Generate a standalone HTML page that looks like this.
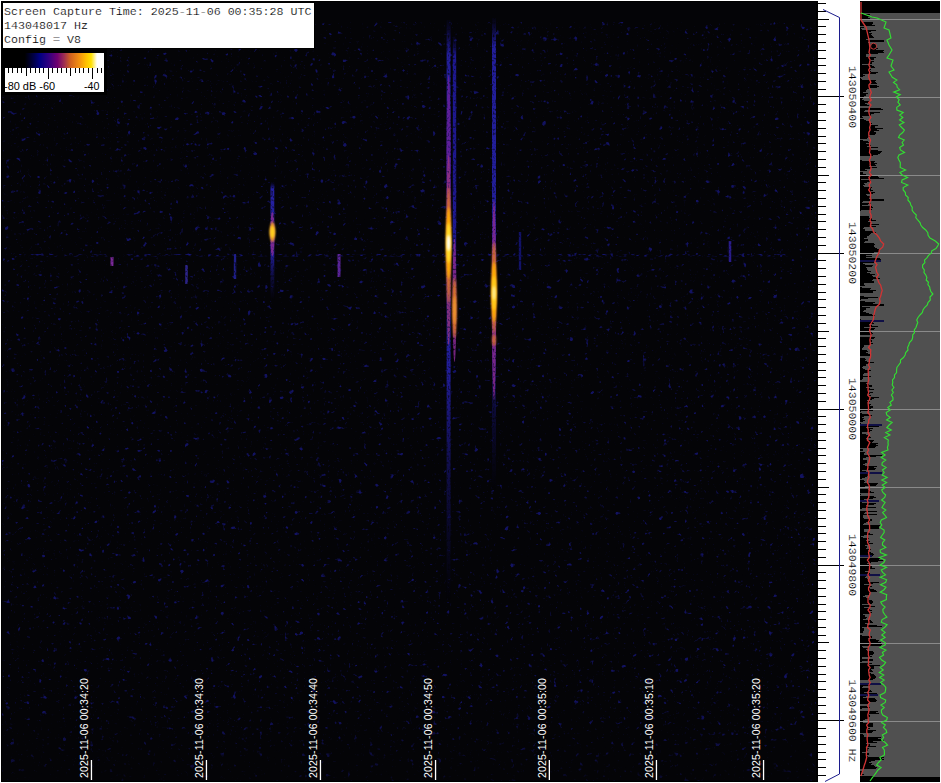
<!DOCTYPE html>
<html><head><meta charset="utf-8"><style>
html,body{margin:0;padding:0;background:#fff;width:941px;height:783px;overflow:hidden;}
svg{display:block;font-family:"Liberation Sans",sans-serif;}
</style></head><body>
<svg width="941" height="783" viewBox="0 0 941 783">

<defs>
<filter id="noise" x="2" y="22" width="814" height="759" filterUnits="userSpaceOnUse" color-interpolation-filters="sRGB">
  <feTurbulence type="fractalNoise" baseFrequency="0.19" numOctaves="2" seed="11" result="t"/>
  <feColorMatrix in="t" type="matrix" values="0 0 0 0 0.07  0 0 0 0 0.07  0 0 0 0 0.38  8 0 0 0 -5.55"/>
  <feGaussianBlur stdDeviation="0.6"/>
</filter>
<filter id="noise2" x="2" y="22" width="814" height="759" filterUnits="userSpaceOnUse" color-interpolation-filters="sRGB">
  <feTurbulence type="fractalNoise" baseFrequency="0.3" numOctaves="2" seed="23" result="t"/>
  <feColorMatrix in="t" type="matrix" values="0 0 0 0 0.05  0 0 0 0 0.05  0 0 0 0 0.22  5 0 0 0 -3.55"/>
  <feGaussianBlur stdDeviation="0.55"/>
</filter>
<filter id="b1" x="-100%" y="-10%" width="300%" height="120%" color-interpolation-filters="sRGB"><feGaussianBlur stdDeviation="1.0"/></filter>
<filter id="b2" x="-100%" y="-10%" width="300%" height="120%" color-interpolation-filters="sRGB"><feGaussianBlur stdDeviation="1.6"/></filter>
<filter id="tex" x="-150%" y="-5%" width="400%" height="110%" color-interpolation-filters="sRGB">
  <feGaussianBlur in="SourceGraphic" stdDeviation="0.6" result="bl"/>
  <feTurbulence type="fractalNoise" baseFrequency="0.6 0.45" numOctaves="1" seed="5" result="t"/>
  <feColorMatrix in="t" type="matrix" values="0 0 0 0 0  0 0 0 0 0  0 0 0 0 0  2.6 0 0 0 -0.3" result="m"/>
  <feComposite in="bl" in2="m" operator="in" result="c"/>
  <feGaussianBlur in="c" stdDeviation="0.75"/>
</filter>
<filter id="tex2" x="0" y="-200%" width="100%" height="500%" color-interpolation-filters="sRGB">
  <feTurbulence type="fractalNoise" baseFrequency="0.25 0.5" numOctaves="1" seed="9" result="t"/>
  <feColorMatrix in="t" type="matrix" values="0 0 0 0 0  0 0 0 0 0  0 0 0 0 0  4 0 0 0 -2.1" result="m"/>
  <feComposite in="SourceGraphic" in2="m" operator="in" result="c"/>
  <feGaussianBlur in="c" stdDeviation="0.7"/>
</filter>
<linearGradient id="cbar" x1="0" x2="1" y1="0" y2="0">
  <stop offset="0" stop-color="#000"/>
  <stop offset="0.20" stop-color="#000"/>
  <stop offset="0.30" stop-color="#000050"/>
  <stop offset="0.35" stop-color="#000080"/>
  <stop offset="0.44" stop-color="#300080"/>
  <stop offset="0.53" stop-color="#700070"/>
  <stop offset="0.60" stop-color="#a03050"/>
  <stop offset="0.66" stop-color="#d06020"/>
  <stop offset="0.75" stop-color="#f39010"/>
  <stop offset="0.82" stop-color="#ffc000"/>
  <stop offset="0.87" stop-color="#ffe000"/>
  <stop offset="0.93" stop-color="#ffffff"/>
  <stop offset="1" stop-color="#ffffff"/>
</linearGradient>
</defs>

<rect x="0" y="0" width="941" height="783" fill="#fff"/>
<rect x="1" y="1" width="817" height="781" fill="#000"/>
<rect x="2" y="2" width="814" height="779" fill="#040407"/>
<rect x="2" y="22" width="814" height="759" filter="url(#noise2)"/>
<rect x="2" y="22" width="814" height="759" filter="url(#noise)"/>
<linearGradient id="fade" x1="0" x2="0" y1="0" y2="1"><stop offset="0" stop-color="#040407" stop-opacity="0"/><stop offset="1" stop-color="#040407" stop-opacity="0.6"/></linearGradient>
<rect x="2" y="700" width="814" height="81" fill="url(#fade)"/>
<rect x="15" y="254" width="775" height="2.5" fill="#16167c" filter="url(#tex2)"/>
<linearGradient id="bg9" x1="0" x2="0" y1="0" y2="1"><stop offset="0" stop-color="#100c60" stop-opacity="0.1"/><stop offset="0.06" stop-color="#221e9a"/><stop offset="0.6" stop-color="#221e9a"/><stop offset="1" stop-color="#100c60" stop-opacity="0"/></linearGradient>
<rect x="446.6" y="20.0" width="4.0" height="580.0" fill="url(#bg9)" filter="url(#tex)"/>
<ellipse cx="448.6" cy="160.0" rx="2.1" ry="85.0" fill="#6a2098" opacity="0.85" filter="url(#tex)"/>
<ellipse cx="448.6" cy="250.0" rx="2.2" ry="95.0" fill="#9a3478" opacity="0.80" filter="url(#tex)"/>
<ellipse cx="448.6" cy="245.0" rx="2.1" ry="58.0" fill="#e07820" opacity="0.95" filter="url(#b1)"/>
<ellipse cx="448.6" cy="243.0" rx="2.4" ry="36.0" fill="#ffb000" opacity="1.00" filter="url(#b1)"/>
<ellipse cx="448.6" cy="243.0" rx="2.2" ry="20.0" fill="#ffe030" opacity="1.00" filter="url(#b1)"/>
<ellipse cx="448.6" cy="243.0" rx="1.7" ry="8.0" fill="#ffffff" opacity="1.00" filter="url(#b1)"/>
<linearGradient id="bg17" x1="0" x2="0" y1="0" y2="1"><stop offset="0" stop-color="#0e0a58" stop-opacity="0.1"/><stop offset="0.06" stop-color="#1e1890"/><stop offset="0.6" stop-color="#1e1890"/><stop offset="1" stop-color="#0e0a58" stop-opacity="0"/></linearGradient>
<rect x="452.8" y="36.0" width="3.4" height="334.0" fill="url(#bg17)" filter="url(#tex)"/>
<ellipse cx="454.5" cy="300.0" rx="1.9" ry="62.0" fill="#8a2a90" opacity="0.85" filter="url(#tex)"/>
<ellipse cx="454.5" cy="308.0" rx="2.0" ry="30.0" fill="#e07a20" opacity="1.00" filter="url(#b1)"/>
<ellipse cx="454.5" cy="310.0" rx="1.4" ry="14.0" fill="#f09a30" opacity="1.00" filter="url(#b1)"/>
<linearGradient id="bg22" x1="0" x2="0" y1="0" y2="1"><stop offset="0" stop-color="#100c60" stop-opacity="0.1"/><stop offset="0.06" stop-color="#221e9a"/><stop offset="0.6" stop-color="#221e9a"/><stop offset="1" stop-color="#100c60" stop-opacity="0"/></linearGradient>
<rect x="492.0" y="18.0" width="4.0" height="472.0" fill="url(#bg22)" filter="url(#tex)"/>
<ellipse cx="494.0" cy="300.0" rx="2.1" ry="100.0" fill="#8a2a90" opacity="0.85" filter="url(#tex)"/>
<ellipse cx="494.0" cy="288.0" rx="2.2" ry="46.0" fill="#e07820" opacity="1.00" filter="url(#b1)"/>
<ellipse cx="494.0" cy="292.0" rx="2.5" ry="30.0" fill="#ffb000" opacity="1.00" filter="url(#b1)"/>
<ellipse cx="494.0" cy="293.0" rx="2.1" ry="17.0" fill="#ffd020" opacity="1.00" filter="url(#b1)"/>
<ellipse cx="494.0" cy="293.0" rx="1.4" ry="7.0" fill="#fff0a0" opacity="1.00" filter="url(#b1)"/>
<ellipse cx="494.0" cy="340.0" rx="1.9" ry="6.0" fill="#d06a30" opacity="1.00" filter="url(#b1)"/>
<linearGradient id="bg30" x1="0" x2="0" y1="0" y2="1"><stop offset="0" stop-color="#100c60" stop-opacity="0.1"/><stop offset="0.06" stop-color="#2420a0"/><stop offset="0.6" stop-color="#2420a0"/><stop offset="1" stop-color="#100c60" stop-opacity="0"/></linearGradient>
<rect x="270.5" y="182.0" width="3.8" height="118.0" fill="url(#bg30)" filter="url(#tex)"/>
<ellipse cx="272.4" cy="234.0" rx="2.2" ry="22.0" fill="#8a2a90" opacity="0.85" filter="url(#tex)"/>
<ellipse cx="272.4" cy="232.0" rx="2.7" ry="10.0" fill="#f0a020" opacity="1.00" filter="url(#b1)"/>
<ellipse cx="272.4" cy="232.0" rx="2.2" ry="6.0" fill="#ffd020" opacity="1.00" filter="url(#b1)"/>
<rect x="337.5" y="254" width="3.0" height="23" fill="#5a2498" filter="url(#tex)"/>
<rect x="110.5" y="257" width="3.0" height="9" fill="#7a2898" filter="url(#tex)"/>
<rect x="185.2" y="265" width="2.6" height="19" fill="#2c2488" filter="url(#tex)"/>
<rect x="233.8" y="254" width="2.4" height="25" fill="#1e1e88" filter="url(#tex)"/>
<rect x="728.7" y="241" width="2.6" height="21" fill="#2a1c8c" filter="url(#tex)"/>
<rect x="518.8" y="232" width="2.4" height="38" fill="#12126a" filter="url(#tex)"/>
<rect x="90.8" y="760" width="1.3" height="20" fill="#fff"/>
<text transform="translate(88.1,778) rotate(-90)" font-family="Liberation Sans" font-size="10.5" letter-spacing="0.18" fill="#fff">2025-11-06 00:34:20</text>
<rect x="205.8" y="760" width="1.3" height="20" fill="#fff"/>
<text transform="translate(203.1,778) rotate(-90)" font-family="Liberation Sans" font-size="10.5" letter-spacing="0.18" fill="#fff">2025-11-06 00:34:30</text>
<rect x="319.8" y="760" width="1.3" height="20" fill="#fff"/>
<text transform="translate(317.1,778) rotate(-90)" font-family="Liberation Sans" font-size="10.5" letter-spacing="0.18" fill="#fff">2025-11-06 00:34:40</text>
<rect x="434.9" y="760" width="1.3" height="20" fill="#fff"/>
<text transform="translate(432.2,778) rotate(-90)" font-family="Liberation Sans" font-size="10.5" letter-spacing="0.18" fill="#fff">2025-11-06 00:34:50</text>
<rect x="548.7" y="760" width="1.3" height="20" fill="#fff"/>
<text transform="translate(546.0,778) rotate(-90)" font-family="Liberation Sans" font-size="10.5" letter-spacing="0.18" fill="#fff">2025-11-06 00:35:00</text>
<rect x="655.8" y="760" width="1.3" height="20" fill="#fff"/>
<text transform="translate(653.1,778) rotate(-90)" font-family="Liberation Sans" font-size="10.5" letter-spacing="0.18" fill="#fff">2025-11-06 00:35:10</text>
<rect x="762.9" y="760" width="1.3" height="20" fill="#fff"/>
<text transform="translate(760.2,778) rotate(-90)" font-family="Liberation Sans" font-size="10.5" letter-spacing="0.18" fill="#fff">2025-11-06 00:35:20</text>
<rect x="1" y="1" width="314" height="48" fill="#000"/>
<rect x="3" y="3" width="311" height="45" fill="#fff"/>
<text x="4.1" y="14.7" font-family="Liberation Mono" font-size="11.65" fill="#000" stroke="#fff" stroke-width="0.18">Screen Capture Time: 2025-11-06 00:35:28 UTC</text>
<text x="4.1" y="28.7" font-family="Liberation Mono" font-size="11.65" fill="#000" stroke="#fff" stroke-width="0.18">143048017 Hz</text>
<text x="4.1" y="42.7" font-family="Liberation Mono" font-size="11.65" fill="#000" stroke="#fff" stroke-width="0.18">Config = V8</text>
<rect x="1" y="48" width="106" height="47" fill="#000"/>
<rect x="5" y="53" width="99" height="15" fill="url(#cbar)"/>
<rect x="5" y="68" width="99" height="24" fill="#fff"/>
<rect x="8" y="68" width="1" height="5" fill="#000" shape-rendering="crispEdges"/>
<rect x="12" y="68" width="1" height="5" fill="#000" shape-rendering="crispEdges"/>
<rect x="17" y="68" width="1" height="5" fill="#000" shape-rendering="crispEdges"/>
<rect x="21" y="68" width="1" height="5" fill="#000" shape-rendering="crispEdges"/>
<rect x="26" y="68" width="1" height="8" fill="#000" shape-rendering="crispEdges"/>
<rect x="30" y="68" width="1" height="5" fill="#000" shape-rendering="crispEdges"/>
<rect x="35" y="68" width="1" height="5" fill="#000" shape-rendering="crispEdges"/>
<rect x="39" y="68" width="1" height="5" fill="#000" shape-rendering="crispEdges"/>
<rect x="43" y="68" width="1" height="5" fill="#000" shape-rendering="crispEdges"/>
<rect x="48" y="68" width="1" height="11" fill="#000" shape-rendering="crispEdges"/>
<rect x="52" y="68" width="1" height="5" fill="#000" shape-rendering="crispEdges"/>
<rect x="57" y="68" width="1" height="5" fill="#000" shape-rendering="crispEdges"/>
<rect x="61" y="68" width="1" height="5" fill="#000" shape-rendering="crispEdges"/>
<rect x="66" y="68" width="1" height="5" fill="#000" shape-rendering="crispEdges"/>
<rect x="70" y="68" width="1" height="8" fill="#000" shape-rendering="crispEdges"/>
<rect x="75" y="68" width="1" height="5" fill="#000" shape-rendering="crispEdges"/>
<rect x="79" y="68" width="1" height="5" fill="#000" shape-rendering="crispEdges"/>
<rect x="83" y="68" width="1" height="5" fill="#000" shape-rendering="crispEdges"/>
<rect x="88" y="68" width="1" height="5" fill="#000" shape-rendering="crispEdges"/>
<rect x="92" y="68" width="1" height="11" fill="#000" shape-rendering="crispEdges"/>
<rect x="97" y="68" width="1" height="5" fill="#000" shape-rendering="crispEdges"/>
<rect x="101" y="68" width="1" height="5" fill="#000" shape-rendering="crispEdges"/>
<text x="4" y="89.8" font-family="Liberation Sans" font-size="10.95" fill="#000">-80 dB -60</text>
<text x="84" y="89.8" font-family="Liberation Sans" font-size="10.7" fill="#000">-40</text>
<rect x="818" y="3" width="8" height="1" fill="#000" shape-rendering="crispEdges"/>
<rect x="818" y="11" width="8" height="1" fill="#000" shape-rendering="crispEdges"/>
<rect x="818" y="19" width="11" height="1" fill="#000" shape-rendering="crispEdges"/>
<rect x="818" y="26" width="8" height="1" fill="#000" shape-rendering="crispEdges"/>
<rect x="818" y="34" width="8" height="1" fill="#000" shape-rendering="crispEdges"/>
<rect x="818" y="42" width="8" height="1" fill="#000" shape-rendering="crispEdges"/>
<rect x="818" y="50" width="8" height="1" fill="#000" shape-rendering="crispEdges"/>
<rect x="818" y="58" width="8" height="1" fill="#000" shape-rendering="crispEdges"/>
<rect x="818" y="65" width="8" height="1" fill="#000" shape-rendering="crispEdges"/>
<rect x="818" y="73" width="8" height="1" fill="#000" shape-rendering="crispEdges"/>
<rect x="818" y="81" width="8" height="1" fill="#000" shape-rendering="crispEdges"/>
<rect x="818" y="89" width="8" height="1" fill="#000" shape-rendering="crispEdges"/>
<rect x="818" y="96" width="26" height="1" fill="#000" shape-rendering="crispEdges"/>
<rect x="818" y="104" width="8" height="1" fill="#000" shape-rendering="crispEdges"/>
<rect x="818" y="112" width="8" height="1" fill="#000" shape-rendering="crispEdges"/>
<rect x="818" y="120" width="8" height="1" fill="#000" shape-rendering="crispEdges"/>
<rect x="818" y="128" width="8" height="1" fill="#000" shape-rendering="crispEdges"/>
<rect x="818" y="136" width="8" height="1" fill="#000" shape-rendering="crispEdges"/>
<rect x="818" y="143" width="8" height="1" fill="#000" shape-rendering="crispEdges"/>
<rect x="818" y="151" width="8" height="1" fill="#000" shape-rendering="crispEdges"/>
<rect x="818" y="159" width="8" height="1" fill="#000" shape-rendering="crispEdges"/>
<rect x="818" y="167" width="8" height="1" fill="#000" shape-rendering="crispEdges"/>
<rect x="818" y="175" width="11" height="1" fill="#000" shape-rendering="crispEdges"/>
<rect x="818" y="182" width="8" height="1" fill="#000" shape-rendering="crispEdges"/>
<rect x="818" y="190" width="8" height="1" fill="#000" shape-rendering="crispEdges"/>
<rect x="818" y="198" width="8" height="1" fill="#000" shape-rendering="crispEdges"/>
<rect x="818" y="206" width="8" height="1" fill="#000" shape-rendering="crispEdges"/>
<rect x="818" y="214" width="8" height="1" fill="#000" shape-rendering="crispEdges"/>
<rect x="818" y="221" width="8" height="1" fill="#000" shape-rendering="crispEdges"/>
<rect x="818" y="229" width="8" height="1" fill="#000" shape-rendering="crispEdges"/>
<rect x="818" y="237" width="8" height="1" fill="#000" shape-rendering="crispEdges"/>
<rect x="818" y="245" width="8" height="1" fill="#000" shape-rendering="crispEdges"/>
<rect x="818" y="253" width="26" height="1" fill="#000" shape-rendering="crispEdges"/>
<rect x="818" y="260" width="8" height="1" fill="#000" shape-rendering="crispEdges"/>
<rect x="818" y="268" width="8" height="1" fill="#000" shape-rendering="crispEdges"/>
<rect x="818" y="276" width="8" height="1" fill="#000" shape-rendering="crispEdges"/>
<rect x="818" y="284" width="8" height="1" fill="#000" shape-rendering="crispEdges"/>
<rect x="818" y="292" width="8" height="1" fill="#000" shape-rendering="crispEdges"/>
<rect x="818" y="299" width="8" height="1" fill="#000" shape-rendering="crispEdges"/>
<rect x="818" y="307" width="8" height="1" fill="#000" shape-rendering="crispEdges"/>
<rect x="818" y="315" width="8" height="1" fill="#000" shape-rendering="crispEdges"/>
<rect x="818" y="323" width="8" height="1" fill="#000" shape-rendering="crispEdges"/>
<rect x="818" y="331" width="11" height="1" fill="#000" shape-rendering="crispEdges"/>
<rect x="818" y="338" width="8" height="1" fill="#000" shape-rendering="crispEdges"/>
<rect x="818" y="346" width="8" height="1" fill="#000" shape-rendering="crispEdges"/>
<rect x="818" y="354" width="8" height="1" fill="#000" shape-rendering="crispEdges"/>
<rect x="818" y="362" width="8" height="1" fill="#000" shape-rendering="crispEdges"/>
<rect x="818" y="370" width="8" height="1" fill="#000" shape-rendering="crispEdges"/>
<rect x="818" y="377" width="8" height="1" fill="#000" shape-rendering="crispEdges"/>
<rect x="818" y="385" width="8" height="1" fill="#000" shape-rendering="crispEdges"/>
<rect x="818" y="393" width="8" height="1" fill="#000" shape-rendering="crispEdges"/>
<rect x="818" y="401" width="8" height="1" fill="#000" shape-rendering="crispEdges"/>
<rect x="818" y="409" width="26" height="1" fill="#000" shape-rendering="crispEdges"/>
<rect x="818" y="416" width="8" height="1" fill="#000" shape-rendering="crispEdges"/>
<rect x="818" y="424" width="8" height="1" fill="#000" shape-rendering="crispEdges"/>
<rect x="818" y="432" width="8" height="1" fill="#000" shape-rendering="crispEdges"/>
<rect x="818" y="440" width="8" height="1" fill="#000" shape-rendering="crispEdges"/>
<rect x="818" y="448" width="8" height="1" fill="#000" shape-rendering="crispEdges"/>
<rect x="818" y="455" width="8" height="1" fill="#000" shape-rendering="crispEdges"/>
<rect x="818" y="463" width="8" height="1" fill="#000" shape-rendering="crispEdges"/>
<rect x="818" y="471" width="8" height="1" fill="#000" shape-rendering="crispEdges"/>
<rect x="818" y="479" width="8" height="1" fill="#000" shape-rendering="crispEdges"/>
<rect x="818" y="487" width="11" height="1" fill="#000" shape-rendering="crispEdges"/>
<rect x="818" y="494" width="8" height="1" fill="#000" shape-rendering="crispEdges"/>
<rect x="818" y="502" width="8" height="1" fill="#000" shape-rendering="crispEdges"/>
<rect x="818" y="510" width="8" height="1" fill="#000" shape-rendering="crispEdges"/>
<rect x="818" y="518" width="8" height="1" fill="#000" shape-rendering="crispEdges"/>
<rect x="818" y="526" width="8" height="1" fill="#000" shape-rendering="crispEdges"/>
<rect x="818" y="533" width="8" height="1" fill="#000" shape-rendering="crispEdges"/>
<rect x="818" y="541" width="8" height="1" fill="#000" shape-rendering="crispEdges"/>
<rect x="818" y="549" width="8" height="1" fill="#000" shape-rendering="crispEdges"/>
<rect x="818" y="557" width="8" height="1" fill="#000" shape-rendering="crispEdges"/>
<rect x="818" y="565" width="26" height="1" fill="#000" shape-rendering="crispEdges"/>
<rect x="818" y="572" width="8" height="1" fill="#000" shape-rendering="crispEdges"/>
<rect x="818" y="580" width="8" height="1" fill="#000" shape-rendering="crispEdges"/>
<rect x="818" y="588" width="8" height="1" fill="#000" shape-rendering="crispEdges"/>
<rect x="818" y="596" width="8" height="1" fill="#000" shape-rendering="crispEdges"/>
<rect x="818" y="604" width="8" height="1" fill="#000" shape-rendering="crispEdges"/>
<rect x="818" y="611" width="8" height="1" fill="#000" shape-rendering="crispEdges"/>
<rect x="818" y="619" width="8" height="1" fill="#000" shape-rendering="crispEdges"/>
<rect x="818" y="627" width="8" height="1" fill="#000" shape-rendering="crispEdges"/>
<rect x="818" y="635" width="8" height="1" fill="#000" shape-rendering="crispEdges"/>
<rect x="818" y="642" width="11" height="1" fill="#000" shape-rendering="crispEdges"/>
<rect x="818" y="650" width="8" height="1" fill="#000" shape-rendering="crispEdges"/>
<rect x="818" y="658" width="8" height="1" fill="#000" shape-rendering="crispEdges"/>
<rect x="818" y="666" width="8" height="1" fill="#000" shape-rendering="crispEdges"/>
<rect x="818" y="674" width="8" height="1" fill="#000" shape-rendering="crispEdges"/>
<rect x="818" y="681" width="8" height="1" fill="#000" shape-rendering="crispEdges"/>
<rect x="818" y="689" width="8" height="1" fill="#000" shape-rendering="crispEdges"/>
<rect x="818" y="697" width="8" height="1" fill="#000" shape-rendering="crispEdges"/>
<rect x="818" y="705" width="8" height="1" fill="#000" shape-rendering="crispEdges"/>
<rect x="818" y="713" width="8" height="1" fill="#000" shape-rendering="crispEdges"/>
<rect x="818" y="720" width="26" height="1" fill="#000" shape-rendering="crispEdges"/>
<rect x="818" y="728" width="8" height="1" fill="#000" shape-rendering="crispEdges"/>
<rect x="818" y="736" width="8" height="1" fill="#000" shape-rendering="crispEdges"/>
<rect x="818" y="744" width="8" height="1" fill="#000" shape-rendering="crispEdges"/>
<rect x="818" y="752" width="8" height="1" fill="#000" shape-rendering="crispEdges"/>
<rect x="818" y="759" width="8" height="1" fill="#000" shape-rendering="crispEdges"/>
<rect x="818" y="767" width="8" height="1" fill="#000" shape-rendering="crispEdges"/>
<rect x="818" y="775" width="8" height="1" fill="#000" shape-rendering="crispEdges"/>
<polyline points="823,9.5 839.5,17.5 839.5,774 825,781.5" fill="none" stroke="#1c1c8c" stroke-width="1"/>
<text transform="translate(852.5,97.0) rotate(90)" font-family="Liberation Mono" font-size="11.5" fill="#000" stroke="#fff" stroke-width="0.18" text-anchor="middle" dominant-baseline="central">143050400</text>
<text transform="translate(852.5,253.0) rotate(90)" font-family="Liberation Mono" font-size="11.5" fill="#000" stroke="#fff" stroke-width="0.18" text-anchor="middle" dominant-baseline="central">143050200</text>
<text transform="translate(852.5,409.0) rotate(90)" font-family="Liberation Mono" font-size="11.5" fill="#000" stroke="#fff" stroke-width="0.18" text-anchor="middle" dominant-baseline="central">143050000</text>
<text transform="translate(852.5,565.0) rotate(90)" font-family="Liberation Mono" font-size="11.5" fill="#000" stroke="#fff" stroke-width="0.18" text-anchor="middle" dominant-baseline="central">143049800</text>
<text transform="translate(852.5,721.0) rotate(90)" font-family="Liberation Mono" font-size="11.5" fill="#000" stroke="#fff" stroke-width="0.18" text-anchor="middle" dominant-baseline="central">143049600 Hz</text>
<rect x="860" y="1" width="80" height="781" fill="#000"/>
<rect x="860" y="13" width="80" height="764" fill="#505050"/>
<path d="M860 14h10v1h-10zM860 15h8v1h-8zM860 16h10v1h-10zM860 17h8v1h-8zM860 18h10v1h-10zM860 19h9v1h-9zM860 20h2v1h-2zM860 21h2v1h-2zM860 22h13v1h-13zM860 23h13v1h-13zM860 24h12v1h-12zM860 25h15v1h-15zM860 27h4v1h-4zM860 28h1v1h-1zM860 29h2v1h-2zM860 30h16v1h-16zM860 31h11v1h-11zM860 32h9v1h-9zM860 33h12v1h-12zM860 34h11v1h-11zM860 35h12v1h-12zM860 36h13v1h-13zM860 37h14v1h-14zM860 38h8v1h-8zM860 39h6v1h-6zM860 40h24v1h-24zM860 41h24v1h-24zM860 42h8v1h-8zM860 43h10v1h-10zM860 44h9v1h-9zM860 45h10v1h-10zM860 46h15v1h-15zM860 47h13v1h-13zM860 48h18v1h-18zM860 49h16v1h-16zM860 50h24v1h-24zM860 51h23v1h-23zM860 52h24v1h-24zM860 53h18v1h-18zM860 54h6v1h-6zM860 55h6v1h-6zM860 56h6v1h-6zM860 57h16v1h-16zM860 58h14v1h-14zM860 59h14v1h-14zM860 60h11v1h-11zM860 61h14v1h-14zM860 62h12v1h-12zM860 63h12v1h-12zM860 64h2v1h-2zM860 65h12v1h-12zM860 66h14v1h-14zM860 67h15v1h-15zM860 68h10v1h-10zM860 69h11v1h-11zM860 70h10v1h-10zM860 71h11v1h-11zM860 72h18v1h-18zM860 73h16v1h-16zM860 74h3v1h-3zM860 75h5v1h-5zM860 76h3v1h-3zM860 78h1v1h-1zM860 79h2v1h-2zM860 80h16v1h-16zM860 81h15v1h-15zM860 82h16v1h-16zM860 83h17v1h-17zM860 84h10v1h-10zM860 85h17v1h-17zM860 86h19v1h-19zM860 87h17v1h-17zM860 88h9v1h-9zM860 89h7v1h-7zM860 90h6v1h-6zM860 91h6v1h-6zM860 92h3v1h-3zM860 93h8v1h-8zM860 94h6v1h-6zM860 95h6v1h-6zM860 96h4v1h-4zM860 98h3v1h-3zM860 99h2v1h-2zM860 100h4v1h-4zM860 101h10v1h-10zM860 102h9v1h-9zM860 103h5v1h-5zM860 104h7v1h-7zM860 105h9v1h-9zM860 108h21v1h-21zM860 109h23v1h-23zM860 110h5v1h-5zM860 111h4v1h-4zM860 112h20v1h-20zM860 113h14v1h-14zM860 114h11v1h-11zM860 115h11v1h-11zM860 116h2v1h-2zM860 117h3v1h-3zM860 119h4v1h-4zM860 120h6v1h-6zM860 121h10v1h-10zM860 122h9v1h-9zM860 123h12v1h-12zM860 124h11v1h-11zM860 125h18v1h-18zM860 126h15v1h-15zM860 127h15v1h-15zM860 128h23v1h-23zM860 129h17v1h-17zM860 130h19v1h-19zM860 131h14v1h-14zM860 132h16v1h-16zM860 133h16v1h-16zM860 134h15v1h-15zM860 135h9v1h-9zM860 136h10v1h-10zM860 137h8v1h-8zM860 138h7v1h-7zM860 140h3v1h-3zM860 141h8v1h-8zM860 142h9v1h-9zM860 143h6v1h-6zM860 144h9v1h-9zM860 145h11v1h-11zM860 146h7v1h-7zM860 147h18v1h-18zM860 148h11v1h-11zM860 149h11v1h-11zM860 150h18v1h-18zM860 151h22v1h-22zM860 152h21v1h-21zM860 153h20v1h-20zM860 154h18v1h-18zM860 155h13v1h-13zM860 160h2v1h-2zM860 161h15v1h-15zM860 162h14v1h-14zM860 163h17v1h-17zM860 164h15v1h-15zM860 165h16v1h-16zM860 166h9v1h-9zM860 167h17v1h-17zM860 168h11v1h-11zM860 169h5v1h-5zM860 170h7v1h-7zM860 172h3v1h-3zM860 173h3v1h-3zM860 174h6v1h-6zM860 175h16v1h-16zM860 176h18v1h-18zM860 177h19v1h-19zM860 178h24v1h-24zM860 179h1v1h-1zM860 180h11v1h-11zM860 181h10v1h-10zM860 182h7v1h-7zM860 183h4v1h-4zM860 184h5v1h-5zM860 185h3v1h-3zM860 186h4v1h-4zM860 187h12v1h-12zM860 188h11v1h-11zM860 189h11v1h-11zM860 190h13v1h-13zM860 191h11v1h-11zM860 192h15v1h-15zM860 193h13v1h-13zM860 194h6v1h-6zM860 195h7v1h-7zM860 196h11v1h-11zM860 197h10v1h-10zM860 198h9v1h-9zM860 199h24v1h-24zM860 200h24v1h-24zM860 201h3v1h-3zM860 202h2v1h-2zM860 203h11v1h-11zM860 204h8v1h-8zM860 205h2v1h-2zM860 206h12v1h-12zM860 207h13v1h-13zM860 208h11v1h-11zM860 209h12v1h-12zM860 210h1v1h-1zM860 216h9v1h-9zM860 217h9v1h-9zM860 218h12v1h-12zM860 219h12v1h-12zM860 220h16v1h-16zM860 221h8v1h-8zM860 222h11v1h-11zM860 223h10v1h-10zM860 224h19v1h-19zM860 225h11v1h-11zM860 226h16v1h-16zM860 227h4v1h-4zM860 228h3v1h-3zM860 229h5v1h-5zM860 230h5v1h-5zM860 231h13v1h-13zM860 232h16v1h-16zM860 233h11v1h-11zM860 234h10v1h-10zM860 235h9v1h-9zM860 236h7v1h-7zM860 237h7v1h-7zM860 238h4v1h-4zM860 239h8v1h-8zM860 240h8v1h-8zM860 241h5v1h-5zM860 242h4v1h-4zM860 243h14v1h-14zM860 244h15v1h-15zM860 245h14v1h-14zM860 246h14v1h-14zM860 247h15v1h-15zM860 248h17v1h-17zM860 249h19v1h-19zM860 250h20v1h-20zM860 251h19v1h-19zM860 252h14v1h-14zM860 253h13v1h-13zM860 254h12v1h-12zM860 255h6v1h-6zM860 256h12v1h-12zM860 257h6v1h-6zM860 258h20v1h-20zM860 259h21v1h-21zM860 260h19v1h-19zM860 261h15v1h-15zM860 262h14v1h-14zM860 263h3v1h-3zM860 264h5v1h-5zM860 265h13v1h-13zM860 266h12v1h-12zM860 267h6v1h-6zM860 268h7v1h-7zM860 269h7v1h-7zM860 270h8v1h-8zM860 271h11v1h-11zM860 272h7v1h-7zM860 273h10v1h-10zM860 274h15v1h-15zM860 275h12v1h-12zM860 276h13v1h-13zM860 277h16v1h-16zM860 278h20v1h-20zM860 279h13v1h-13zM860 280h12v1h-12zM860 281h14v1h-14zM860 282h14v1h-14zM860 283h4v1h-4zM860 284h4v1h-4zM860 285h5v1h-5zM860 287h2v1h-2zM860 288h11v1h-11zM860 289h10v1h-10zM860 290h16v1h-16zM860 291h13v1h-13zM860 292h13v1h-13zM860 296h4v1h-4zM860 297h18v1h-18zM860 298h8v1h-8zM860 299h1v1h-1zM860 301h5v1h-5zM860 302h15v1h-15zM860 303h13v1h-13zM860 304h24v1h-24zM860 305h24v1h-24zM860 306h2v1h-2zM860 307h10v1h-10zM860 308h6v1h-6zM860 309h6v1h-6zM860 310h4v1h-4zM860 311h3v1h-3zM860 312h6v1h-6zM860 313h9v1h-9zM860 314h12v1h-12zM860 315h15v1h-15zM860 319h1v1h-1zM860 320h2v1h-2zM860 322h13v1h-13zM860 323h14v1h-14zM860 324h9v1h-9zM860 325h12v1h-12zM860 326h18v1h-18zM860 327h4v1h-4zM860 328h15v1h-15zM860 329h14v1h-14zM860 330h9v1h-9zM860 331h11v1h-11zM860 332h12v1h-12zM860 333h13v1h-13zM860 334h12v1h-12zM860 337h15v1h-15zM860 338h14v1h-14zM860 339h11v1h-11zM860 340h12v1h-12zM860 341h12v1h-12zM860 342h10v1h-10zM860 343h13v1h-13zM860 344h11v1h-11zM860 345h4v1h-4zM860 346h4v1h-4zM860 347h3v1h-3zM860 348h2v1h-2zM860 349h2v1h-2zM860 350h7v1h-7zM860 351h8v1h-8zM860 352h6v1h-6zM860 353h8v1h-8zM860 354h11v1h-11zM860 355h11v1h-11zM860 358h5v1h-5zM860 359h6v1h-6zM860 360h5v1h-5zM860 361h7v1h-7zM860 362h14v1h-14zM860 363h9v1h-9zM860 364h6v1h-6zM860 365h6v1h-6zM860 366h3v1h-3zM860 367h2v1h-2zM860 368h3v1h-3zM860 369h5v1h-5zM860 370h11v1h-11zM860 371h9v1h-9zM860 372h8v1h-8zM860 373h4v1h-4zM860 374h3v1h-3zM860 375h3v1h-3zM860 376h11v1h-11zM860 377h3v1h-3zM860 378h3v1h-3zM860 379h2v1h-2zM860 382h8v1h-8zM860 383h6v1h-6zM860 384h9v1h-9zM860 385h12v1h-12zM860 386h12v1h-12zM860 387h6v1h-6zM860 388h10v1h-10zM860 389h14v1h-14zM860 390h9v1h-9zM860 391h9v1h-9zM860 392h13v1h-13zM860 393h10v1h-10zM860 394h8v1h-8zM860 395h11v1h-11zM860 396h10v1h-10zM860 397h19v1h-19zM860 398h14v1h-14zM860 399h12v1h-12zM860 400h7v1h-7zM860 401h10v1h-10zM860 402h8v1h-8zM860 403h8v1h-8zM860 404h11v1h-11zM860 405h10v1h-10zM860 406h13v1h-13zM860 407h13v1h-13zM860 408h11v1h-11zM860 409h12v1h-12zM860 410h13v1h-13zM860 411h1v1h-1zM860 413h2v1h-2zM860 414h9v1h-9zM860 415h12v1h-12zM860 416h4v1h-4zM860 417h2v1h-2zM860 418h4v1h-4zM860 419h3v1h-3zM860 420h5v1h-5zM860 421h3v1h-3zM860 423h1v1h-1zM860 424h4v1h-4zM860 425h4v1h-4zM860 426h19v1h-19zM860 427h6v1h-6zM860 428h13v1h-13zM860 429h10v1h-10zM860 430h12v1h-12zM860 431h10v1h-10zM860 432h2v1h-2zM860 433h2v1h-2zM860 434h6v1h-6zM860 435h8v1h-8zM860 436h10v1h-10zM860 437h11v1h-11zM860 438h6v1h-6zM860 439h8v1h-8zM860 440h14v1h-14zM860 441h13v1h-13zM860 442h12v1h-12zM860 443h18v1h-18zM860 444h16v1h-16zM860 445h18v1h-18zM860 446h16v1h-16zM860 447h15v1h-15zM860 449h3v1h-3zM860 450h3v1h-3zM860 452h5v1h-5zM860 453h4v1h-4zM860 454h4v1h-4zM860 455h22v1h-22zM860 456h16v1h-16zM860 457h6v1h-6zM860 458h3v1h-3zM860 459h3v1h-3zM860 460h7v1h-7zM860 461h7v1h-7zM860 462h7v1h-7zM860 463h5v1h-5zM860 464h3v1h-3zM860 465h5v1h-5zM860 466h17v1h-17zM860 467h14v1h-14zM860 468h16v1h-16zM860 469h15v1h-15zM860 470h2v1h-2zM860 471h6v1h-6zM860 472h9v1h-9zM860 473h8v1h-8zM860 474h9v1h-9zM860 475h9v1h-9zM860 476h7v1h-7zM860 477h5v1h-5zM860 478h2v1h-2zM860 480h4v1h-4zM860 481h5v1h-5zM860 482h4v1h-4zM860 483h18v1h-18zM860 484h17v1h-17zM860 485h16v1h-16zM860 486h5v1h-5zM860 487h3v1h-3zM860 489h8v1h-8zM860 490h9v1h-9zM860 491h11v1h-11zM860 492h14v1h-14zM860 494h1v1h-1zM860 496h14v1h-14zM860 497h16v1h-16zM860 498h13v1h-13zM860 499h4v1h-4zM860 501h3v1h-3zM860 502h2v1h-2zM860 503h16v1h-16zM860 504h14v1h-14zM860 505h6v1h-6zM860 506h8v1h-8zM860 507h16v1h-16zM860 508h2v1h-2zM860 511h17v1h-17zM860 512h5v1h-5zM860 513h4v1h-4zM860 514h17v1h-17zM860 515h3v1h-3zM860 516h3v1h-3zM860 517h3v1h-3zM860 518h4v1h-4zM860 519h12v1h-12zM860 520h12v1h-12zM860 521h10v1h-10zM860 522h6v1h-6zM860 523h4v1h-4zM860 524h3v1h-3zM860 525h20v1h-20zM860 526h19v1h-19zM860 527h19v1h-19zM860 528h19v1h-19zM860 529h4v1h-4zM860 530h4v1h-4zM860 531h4v1h-4zM860 532h8v1h-8zM860 533h10v1h-10zM860 534h13v1h-13zM860 535h4v1h-4zM860 536h1v1h-1zM860 537h3v1h-3zM860 538h9v1h-9zM860 539h8v1h-8zM860 540h6v1h-6zM860 541h10v1h-10zM860 542h9v1h-9zM860 543h13v1h-13zM860 544h8v1h-8zM860 545h5v1h-5zM860 546h7v1h-7zM860 547h7v1h-7zM860 548h6v1h-6zM860 549h11v1h-11zM860 550h8v1h-8zM860 551h9v1h-9zM860 552h11v1h-11zM860 553h13v1h-13zM860 554h14v1h-14zM860 555h13v1h-13zM860 556h1v1h-1zM860 558h20v1h-20zM860 559h19v1h-19zM860 560h23v1h-23zM860 561h18v1h-18zM860 562h11v1h-11zM860 563h7v1h-7zM860 564h9v1h-9zM860 565h5v1h-5zM860 566h12v1h-12zM860 567h12v1h-12zM860 568h15v1h-15zM860 569h9v1h-9zM860 570h10v1h-10zM860 571h5v1h-5zM860 572h9v1h-9zM860 573h10v1h-10zM860 574h8v1h-8zM860 575h5v1h-5zM860 576h6v1h-6zM860 577h5v1h-5zM860 578h7v1h-7zM860 579h9v1h-9zM860 580h8v1h-8zM860 581h8v1h-8zM860 582h19v1h-19zM860 583h13v1h-13zM860 584h4v1h-4zM860 585h10v1h-10zM860 586h12v1h-12zM860 587h8v1h-8zM860 588h10v1h-10zM860 589h14v1h-14zM860 590h16v1h-16zM860 591h17v1h-17zM860 592h10v1h-10zM860 593h9v1h-9zM860 594h9v1h-9zM860 595h5v1h-5zM860 596h3v1h-3zM860 597h6v1h-6zM860 598h9v1h-9zM860 599h9v1h-9zM860 600h12v1h-12zM860 601h13v1h-13zM860 602h13v1h-13zM860 603h12v1h-12zM860 604h2v1h-2zM860 605h10v1h-10zM860 606h15v1h-15zM860 607h4v1h-4zM860 608h10v1h-10zM860 609h10v1h-10zM860 610h12v1h-12zM860 611h10v1h-10zM860 612h12v1h-12zM860 613h10v1h-10zM860 614h3v1h-3zM860 615h5v1h-5zM860 616h5v1h-5zM860 617h7v1h-7zM860 618h6v1h-6zM860 619h3v1h-3zM860 620h11v1h-11zM860 621h12v1h-12zM860 622h13v1h-13zM860 623h5v1h-5zM860 624h7v1h-7zM860 625h17v1h-17zM860 626h22v1h-22zM860 627h2v1h-2zM860 628h4v1h-4zM860 629h4v1h-4zM860 630h4v1h-4zM860 631h3v1h-3zM860 632h3v1h-3zM860 635h2v1h-2zM860 636h12v1h-12zM860 637h12v1h-12zM860 638h8v1h-8zM860 639h16v1h-16zM860 640h19v1h-19zM860 641h18v1h-18zM860 642h21v1h-21zM860 643h23v1h-23zM860 644h22v1h-22zM860 645h21v1h-21zM860 646h2v1h-2zM860 647h3v1h-3zM860 648h9v1h-9zM860 649h6v1h-6zM860 650h7v1h-7zM860 651h13v1h-13zM860 652h14v1h-14zM860 653h14v1h-14zM860 654h13v1h-13zM860 655h10v1h-10zM860 656h12v1h-12zM860 657h2v1h-2zM860 658h2v1h-2zM860 659h13v1h-13zM860 660h13v1h-13zM860 661h2v1h-2zM860 663h12v1h-12zM860 664h9v1h-9zM860 665h20v1h-20zM860 666h14v1h-14zM860 667h14v1h-14zM860 668h14v1h-14zM860 669h11v1h-11zM860 670h12v1h-12zM860 671h13v1h-13zM860 672h9v1h-9zM860 673h11v1h-11zM860 674h14v1h-14zM860 675h15v1h-15zM860 676h16v1h-16zM860 677h16v1h-16zM860 678h15v1h-15zM860 679h13v1h-13zM860 683h15v1h-15zM860 684h10v1h-10zM860 685h10v1h-10zM860 686h3v1h-3zM860 687h2v1h-2zM860 688h9v1h-9zM860 689h10v1h-10zM860 690h11v1h-11zM860 691h12v1h-12zM860 692h4v1h-4zM860 693h17v1h-17zM860 694h5v1h-5zM860 695h6v1h-6zM860 696h6v1h-6zM860 697h3v1h-3zM860 698h15v1h-15zM860 699h16v1h-16zM860 700h17v1h-17zM860 701h16v1h-16zM860 702h9v1h-9zM860 703h8v1h-8zM860 706h7v1h-7zM860 707h10v1h-10zM860 708h2v1h-2zM860 711h18v1h-18zM860 712h16v1h-16zM860 713h19v1h-19zM860 714h9v1h-9zM860 715h10v1h-10zM860 716h10v1h-10zM860 717h9v1h-9zM860 718h9v1h-9zM860 719h5v1h-5zM860 720h3v1h-3zM860 721h3v1h-3zM860 722h3v1h-3zM860 723h13v1h-13zM860 724h13v1h-13zM860 725h13v1h-13zM860 726h13v1h-13zM860 727h8v1h-8zM860 728h10v1h-10zM860 729h8v1h-8zM860 730h16v1h-16zM860 731h13v1h-13zM860 732h12v1h-12zM860 734h3v1h-3zM860 735h4v1h-4zM860 736h4v1h-4zM860 737h21v1h-21zM860 738h18v1h-18zM860 739h21v1h-21zM860 740h24v1h-24zM860 741h13v1h-13zM860 742h17v1h-17zM860 743h6v1h-6zM860 744h10v1h-10zM860 745h10v1h-10zM860 746h16v1h-16zM860 747h7v1h-7zM860 748h9v1h-9zM860 749h8v1h-8zM860 750h8v1h-8zM860 751h6v1h-6zM860 752h2v1h-2zM860 753h9v1h-9zM860 754h9v1h-9zM860 755h7v1h-7zM860 756h8v1h-8zM860 757h24v1h-24zM860 758h22v1h-22zM860 759h24v1h-24zM860 760h15v1h-15zM860 761h11v1h-11zM860 762h9v1h-9zM860 763h12v1h-12zM860 764h11v1h-11zM860 765h14v1h-14zM860 766h15v1h-15zM860 767h17v1h-17zM860 768h16v1h-16zM860 771h2v1h-2zM860 772h2v1h-2zM860 773h1v1h-1zM860 774h4v1h-4zM860 776h14v1h-14z" fill="#000" shape-rendering="crispEdges"/>
<rect x="860" y="260" width="21" height="2" fill="#101046" shape-rendering="crispEdges"/>
<rect x="860" y="320" width="24" height="2" fill="#101046" shape-rendering="crispEdges"/>
<rect x="860" y="424" width="22" height="2" fill="#101046" shape-rendering="crispEdges"/>
<rect x="860" y="472" width="22" height="2" fill="#101046" shape-rendering="crispEdges"/>
<rect x="860" y="500" width="19" height="2" fill="#101046" shape-rendering="crispEdges"/>
<rect x="860" y="574" width="20" height="2" fill="#101046" shape-rendering="crispEdges"/>
<rect x="860" y="683" width="21" height="2" fill="#101046" shape-rendering="crispEdges"/>
<rect x="860" y="694" width="18" height="2" fill="#101046" shape-rendering="crispEdges"/>
<rect x="860" y="555" width="12" height="2" fill="#101046" shape-rendering="crispEdges"/>
<rect x="860" y="19" width="80" height="1" fill="#8a8a8a"/>
<rect x="860" y="97" width="80" height="1" fill="#8a8a8a"/>
<rect x="860" y="175" width="80" height="1" fill="#8a8a8a"/>
<rect x="860" y="253" width="80" height="1" fill="#8a8a8a"/>
<rect x="860" y="331" width="80" height="1" fill="#8a8a8a"/>
<rect x="860" y="409" width="80" height="1" fill="#8a8a8a"/>
<rect x="860" y="487" width="80" height="1" fill="#8a8a8a"/>
<rect x="860" y="565" width="80" height="1" fill="#8a8a8a"/>
<rect x="860" y="643" width="80" height="1" fill="#8a8a8a"/>
<rect x="860" y="721" width="80" height="1" fill="#8a8a8a"/>
<rect x="860" y="777" width="80" height="5" fill="#000"/>
<polyline points="861.0,2.0 861.0,4.6 861.0,7.1 861.0,9.7 861.0,12.3 861.0,14.9 861.0,17.4 861.0,20.0 863.5,23.5 866.0,27.0 866.6,29.6 867.2,32.2 867.8,34.8 868.4,37.4 869.0,40.0 869.2,42.5 869.5,45.0 869.8,47.5 869.5,50.0 869.0,52.5 870.4,55.0 868.8,57.5 870.1,60.0 869.6,62.5 868.8,65.0 870.0,67.5 868.7,70.0 869.8,72.5 868.8,75.0 868.9,77.5 869.8,80.0 870.9,82.5 868.9,85.0 869.2,87.5 870.4,90.0 871.3,92.5 870.2,95.0 869.7,97.5 871.3,100.0 868.7,102.5 871.0,105.0 869.4,107.5 869.0,110.0 868.9,112.5 869.5,115.0 870.9,117.5 869.1,120.0 870.2,122.5 870.4,125.0 869.6,127.5 870.1,130.0 868.8,132.5 868.8,135.0 869.2,137.5 870.5,140.0 869.8,142.5 869.5,145.0 870.2,147.5 869.9,150.0 869.4,152.5 870.8,155.0 870.6,157.5 869.3,160.0 870.2,162.5 870.1,165.0 871.1,167.5 870.6,170.0 869.4,172.5 871.3,175.0 868.9,177.5 869.8,180.0 870.7,182.5 869.0,185.0 870.0,187.5 868.7,190.0 870.5,192.5 870.7,195.0 870.2,197.5 871.1,200.0 869.5,202.5 870.5,205.0 870.3,207.5 870.2,210.0 869.9,212.5 871.0,215.0 871.2,217.5 869.9,220.0 871.2,223.0 870.3,226.0 872.8,229.0 873.4,232.0 877.1,235.0 879.4,238.0 880.6,241.0 883.7,244.0 882.8,247.0 879.3,250.0 878.9,253.0 877.1,256.0 875.9,259.0 874.8,262.0 877.0,264.6 875.5,267.1 876.2,269.7 876.8,272.3 878.5,274.9 876.5,277.4 877.9,280.0 878.9,282.6 880.7,285.2 881.3,287.8 882.2,290.4 881.4,293.0 880.8,295.8 879.6,298.7 880.1,301.5 879.3,304.3 876.0,307.2 875.1,310.0 874.5,312.5 873.8,315.0 873.7,317.5 873.2,320.0 871.6,322.5 870.1,325.0 870.5,327.5 869.6,330.0 870.2,332.5 871.2,335.0 870.4,337.5 869.9,340.0 870.2,342.5 870.3,345.0 868.5,347.5 870.8,350.0 870.5,352.5 870.7,355.0 870.4,357.5 869.3,360.0 869.3,362.5 868.4,365.0 869.8,367.5 868.2,370.0 868.2,372.5 868.5,375.0 868.4,377.5 868.8,380.0 868.0,382.5 867.8,385.0 868.2,387.5 868.0,390.0 868.7,392.5 867.7,395.0 870.1,397.5 869.3,400.0 868.0,402.5 868.3,405.0 868.5,407.5 868.5,410.0 867.8,412.5 869.8,415.0 870.2,417.5 868.7,420.0 868.7,422.5 867.6,425.0 867.6,427.5 868.3,430.0 868.0,432.5 869.6,435.0 867.7,437.5 867.3,440.0 869.8,442.5 868.6,445.0 867.5,447.5 868.6,450.0 867.2,452.5 868.5,455.0 869.8,457.5 869.4,460.0 868.9,462.5 867.7,465.0 868.0,467.5 867.4,470.0 869.0,472.5 868.3,475.0 869.0,477.5 867.7,480.0 867.4,482.5 869.0,485.0 869.5,487.5 869.1,490.0 868.9,492.5 868.9,495.0 868.7,497.5 867.2,500.0 868.1,502.5 867.6,505.0 866.8,507.5 866.8,510.0 867.5,512.5 867.5,515.0 868.7,517.5 869.5,520.0 868.1,522.5 869.5,525.0 869.6,527.5 869.6,530.0 867.9,532.5 867.6,535.0 867.6,537.5 867.6,540.0 867.6,542.5 868.8,545.0 869.6,547.5 869.5,550.0 868.5,552.5 869.0,555.0 869.4,557.5 867.4,560.0 869.1,562.5 869.8,565.0 869.5,567.5 869.4,570.0 868.7,572.5 867.8,575.0 869.6,577.5 868.3,580.0 869.7,582.5 870.2,585.0 868.6,587.5 868.6,590.0 870.2,592.5 869.6,595.0 868.1,597.5 868.0,600.0 868.0,602.5 870.1,605.0 869.9,607.5 868.0,610.0 869.9,612.5 870.3,615.0 869.4,617.5 868.6,620.0 869.1,622.5 868.0,625.0 867.6,627.5 870.3,630.0 869.4,632.5 869.1,635.0 870.2,637.5 868.8,640.0 870.0,642.5 869.9,645.0 868.2,647.5 868.3,650.0 868.4,652.5 868.3,655.0 869.2,657.5 868.3,660.0 868.8,662.5 868.0,665.0 870.1,667.5 868.6,670.0 868.9,672.5 869.2,675.0 870.1,677.5 868.8,680.0 870.2,682.5 869.0,685.0 869.1,687.5 869.1,690.0 867.7,692.5 868.8,695.0 868.1,697.5 867.6,700.0 869.7,702.5 867.8,705.0 868.6,707.5 869.1,710.0 868.5,712.5 867.8,715.0 868.2,717.5 868.2,720.0 868.7,722.5 866.6,725.0 867.8,727.5 866.8,730.0 866.8,732.5 868.0,735.0 867.1,737.5 867.2,740.0 867.6,742.5 867.9,745.0 866.5,747.5 866.8,750.0 866.4,752.5 866.3,755.0 866.7,757.5 866.0,760.0 865.2,762.7 864.3,765.3 863.5,768.0 862.7,770.7 861.8,773.3 861,776" fill="none" stroke="#d03434" stroke-width="1.3"/>
<polyline points="861.0,13.0 866.5,15.0 872.0,17.0 877.0,18.0 881.5,20.0 886.0,22.0 885.0,25.0 884.0,28.0 889.0,30.0 889.7,32.7 890.3,35.3 891.0,38.0 887.0,40.0 888.0,42.5 889.0,45.0 890.5,47.5 892.0,50.0 890.5,52.5 889.0,55.0 887.0,58.0 893.0,60.0 892.0,63.0 891.0,66.0 892.5,68.0 894.0,70.0 889.0,72.0 890.7,74.7 892.3,77.3 896.9,80.0 893.5,82.4 896.8,84.9 897.2,87.3 899.6,89.7 893.7,92.1 900.2,94.6 896.3,97.0 899.2,99.6 897.9,102.2 900.2,104.8 896.7,107.4 896.9,110.0 903.2,112.5 899.7,115.0 902.8,117.5 899.6,120.0 903.9,122.5 899.3,125.0 901.7,127.5 904.4,130.0 902.7,132.5 899.6,135.0 898.5,137.5 904.2,140.0 902.1,142.5 903.5,145.0 899.7,147.5 900.4,150.0 904.5,152.5 899.0,155.0 897.8,157.5 898.9,160.0 900.3,162.5 900.3,165.0 900.2,167.5 905.6,170.0 899.9,172.5 902.2,175.0 907.6,177.5 902.1,180.0 901.5,182.5 907.8,185.0 903.2,187.5 903.2,190.0 905.4,192.5 905.5,195.0 908.2,197.5 907.9,200.0 910.1,202.5 910.8,205.0 912.3,207.5 912.1,210.0 913.6,212.5 916.3,215.0 915.8,217.5 917.7,220.0 920.0,222.5 920.8,225.0 922.7,227.5 925.7,230.0 927.8,232.7 928.1,235.3 930.0,238.0 935.3,241.0 938.7,244.0 937.6,246.2 935.9,248.5 931.8,250.8 931.4,253.0 928.5,255.4 926.9,257.8 924.5,260.2 924.9,262.6 922.6,265.0 922.6,267.5 924.3,270.0 924.0,272.5 925.8,275.0 926.9,277.5 926.2,280.0 928.4,282.3 927.9,284.7 929.7,287.0 930.0,289.3 930.9,291.7 932.9,294.0 930.0,297.0 930.3,300.0 928.0,302.5 927.3,305.0 924.6,307.5 923.0,310.0 922.4,312.5 920.0,315.0 918.0,317.5 916.7,320.0 917.8,322.5 916.8,325.0 916.0,327.5 914.3,330.0 914.5,332.5 912.7,335.0 912.7,337.5 911.9,340.0 909.5,342.5 908.8,345.0 907.6,347.5 908.0,350.0 905.7,352.5 905.1,355.0 903.5,357.5 900.5,360.0 900.5,362.5 898.7,365.0 896.9,367.5 896.6,370.0 896.6,372.5 894.5,375.0 894.5,377.5 892.5,380.0 892.8,382.5 892.2,385.0 893.9,387.5 891.9,390.0 893.3,392.5 891.4,395.0 892.9,397.5 893.0,400.0 889.9,402.5 891.3,405.0 887.8,407.5 890.3,410.0 886.2,412.5 886.8,415.0 890.3,417.5 886.6,420.0 892.1,422.5 889.1,425.0 886.8,427.5 891.3,430.0 885.8,432.5 889.9,435.0 884.4,437.5 888.3,440.0 888.0,442.5 888.2,445.0 887.4,447.5 888.0,450.0 881.6,452.5 885.1,455.0 881.2,457.5 885.7,460.0 882.3,462.5 881.9,465.0 886.1,467.5 882.5,470.0 884.2,472.5 882.2,475.0 887.1,477.5 881.8,480.0 886.6,482.5 882.3,485.0 885.0,487.5 881.7,490.0 882.9,492.5 885.6,495.0 884.7,497.5 881.6,500.0 885.1,502.5 883.4,505.0 881.9,507.5 885.8,510.0 882.6,512.5 884.8,515.0 886.5,517.5 881.3,520.0 880.2,522.5 881.8,525.0 880.0,527.5 884.1,530.0 884.1,532.5 882.3,535.0 880.6,537.5 884.8,540.0 882.6,542.5 882.4,545.0 885.8,547.5 880.2,550.0 880.4,552.5 886.4,555.0 879.4,557.5 885.1,560.0 883.8,562.5 880.2,565.0 886.5,567.4 881.2,569.9 882.6,572.4 885.5,574.9 880.2,577.3 886.6,579.8 885.7,582.3 880.5,584.8 886.0,587.2 884.0,589.7 880.2,592.2 886.7,594.7 886.3,597.1 886.4,599.6 880.7,602.1 882.2,604.6 885.1,607.0 882.8,609.5 883.1,612.0 884.7,614.5 886.9,617.1 882.1,619.6 881.3,622.2 887.1,624.7 884.8,627.3 881.4,629.8 885.1,632.4 881.8,634.9 885.1,637.5 880.7,640.0 885.2,642.5 885.2,645.0 880.1,647.5 885.9,650.0 882.4,652.5 883.6,655.0 879.6,657.5 881.7,660.0 885.6,662.5 883.7,665.0 880.2,667.5 883.2,670.0 879.3,672.5 883.7,675.0 879.7,677.5 884.1,680.0 880.6,682.5 883.7,685.0 885.8,687.5 885.6,690.0 885.0,692.5 880.1,695.0 880.6,697.5 885.7,700.0 885.2,702.5 880.9,705.0 884.2,707.5 881.4,710.0 881.5,712.5 882.8,715.0 887.3,717.5 886.7,720.0 881.6,722.5 885.3,725.0 883.4,727.5 886.1,730.0 886.8,732.5 882.3,735.0 883.7,737.5 881.5,740.0 885.2,742.5 887.6,745.0 882.5,747.5 884.3,750.0 884.4,752.5 884.4,755.0 879.9,757.5 881.2,760.0 878.5,762.5 876.6,765.0 881.1,767.5 878.0,770.0 876.0,772.8 874.0,775.5 872.0,778.2 870,781" fill="none" stroke="#33dd33" stroke-width="1.15"/>
<circle cx="873.6" cy="46.2" r="3" fill="#000" stroke="#c03a3a" stroke-width="1"/>
</svg>
</body></html>
